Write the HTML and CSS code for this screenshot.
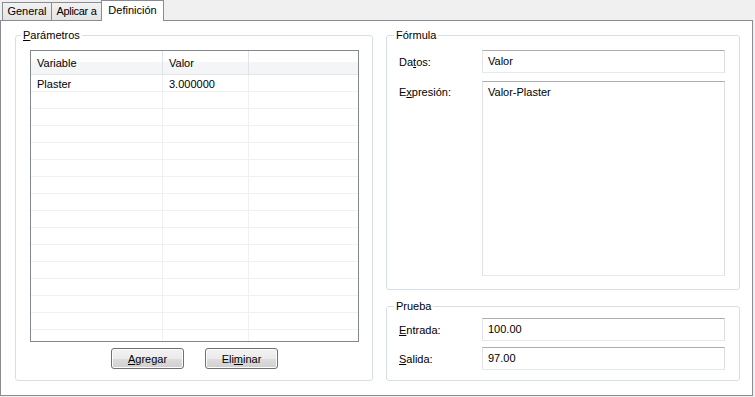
FILE: index.html
```html
<!DOCTYPE html>
<html lang="es">
<head>
  <meta charset="UTF-8" />
  <title>Definición</title>
  <link rel="stylesheet" href="styles.css">
</head>
<body>
  <div class="tabs">
    <div class="tab tab-general">General</div>
    <div class="tab tab-apply">Aplicar a</div>
    <div class="tab tab-def active">Definición</div>
  </div>

  <div class="panel">
    <fieldset class="group params">
      <legend><u>P</u>arámetros</legend>
      <div class="list">
        <div class="list-head">
          <div class="cell">Variable</div>
          <div class="cell">Valor</div>
          <div class="cell"></div>
        </div>
        <div class="list-body" id="rows">
          <div class="row">
            <div class="cell">Plaster</div>
            <div class="cell">3.000000</div>
            <div class="cell"></div>
          </div>
        </div>
      </div>
      <div class="buttons">
        <button class="btn"><u>A</u>gregar</button>
        <button class="btn">Eli<u>m</u>inar</button>
      </div>
    </fieldset>

    <div class="right">
      <fieldset class="group formula">
        <legend>Fórmula</legend>
        <div class="field">
          <label>Da<u>t</u>os:</label>
          <div class="input">Valor</div>
        </div>
        <div class="field top">
          <label>E<u>x</u>presión:</label>
          <div class="input area">Valor-Plaster</div>
        </div>
      </fieldset>

      <fieldset class="group test">
        <legend>Prueba</legend>
        <div class="field">
          <label><u>E</u>ntrada:</label>
          <div class="input">100.00</div>
        </div>
        <div class="field">
          <label><u>S</u>alida:</label>
          <div class="input">97.00</div>
        </div>
      </fieldset>
    </div>
  </div>

  <script>
    // empty grid rows below the data
    const rows = document.getElementById('rows');
    for (let i = 0; i < 16; i++) {
      const row = document.createElement('div');
      row.className = 'row';
      row.innerHTML = '<div class="cell"></div><div class="cell"></div><div class="cell"></div>';
      rows.appendChild(row);
    }
  </script>
</body>
</html>
```

FILE: styles.css
```css
* { margin: 0; padding: 0; box-sizing: border-box; }
body {
  font-family: "Liberation Sans", Arial, sans-serif;
  font-size: 11px;
  color: #000;
  background: #f0f0f0;
  width: 755px;
  height: 397px;
  overflow: hidden;
}
u { text-decoration: underline; text-underline-offset: 1px; }

.tabs {
  display: flex;
  align-items: flex-end;
  height: 20px;
  padding-left: 2px;
}
.tab {
  height: 18px;
  line-height: 16px;
  text-align: center;
  white-space: nowrap;
  border: 1px solid #898c95;
  border-bottom: none;
  background: linear-gradient(#f2f2f2, #e4e4e4);
  margin-right: -1px;
}
.tab-general { width: 50px; }
.tab-apply { width: 51px; letter-spacing: -0.3px; }
.tab-def { width: 63px; }
.tab.active {
  position: relative;
  z-index: 1;
  height: 21px;
  line-height: 18px;
  margin-bottom: -1px;
  background: #fff;
}

.panel {
  display: flex;
  gap: 13px;
  width: 753px;
  height: 376px;
  background: #fff;
  border: 1px solid #898c95;
  padding: 7px 12px 14px 14px;
}

.group {
  border: 1px solid #d5dfe5;
  border-radius: 3px;
  min-width: 0;
}
.group legend {
  line-height: 14px;
  padding: 0 2px;
}

.params {
  width: 358px;
  height: 353px;
  padding: 8px 13px 11px 14px;
  display: flex;
  flex-direction: column;
}
.params legend { margin-left: -9px; }

.list {
  height: 292px;
  border: 1px solid #828790;
  overflow: hidden;
}
.list-head, .row {
  display: grid;
  grid-template-columns: 132px 86px 1fr;
}
.list-head {
  height: 24px;
  background: linear-gradient(#fff 0, #fff 50%, #f4f5f7 50%, #f4f5f7 100%);
  border-bottom: 1px solid #e5e5e5;
}
.list-head .cell {
  line-height: 24px;
  padding-left: 6px;
  border-right: 1px solid #e0e3e8;
}
.row {
  height: 17px;
  border-bottom: 1px solid #f0f0f0;
}
.row .cell {
  line-height: 18px;
  padding-left: 6px;
  border-right: 1px solid #f0f0f0;
}
.list-head .cell:last-child, .row .cell:last-child { border-right: none; }

.buttons {
  display: flex;
  justify-content: center;
  gap: 21px;
  margin-top: 6px;
}
.btn {
  width: 73px;
  height: 21px;
  font-family: inherit;
  font-size: 11px;
  color: #000;
  border: 1px solid #707070;
  border-radius: 3px;
  background: linear-gradient(#f2f2f2 0, #ebebeb 50%, #dddddd 51%, #cfcfcf 100%);
  box-shadow: inset 0 0 0 1px #fcfcfc;
}

.right {
  width: 354px;
  display: flex;
  flex-direction: column;
  gap: 9px;
}
.formula {
  height: 262px;
  padding: 8px 14px 13px 12px;
  display: flex;
  flex-direction: column;
  gap: 8px;
}
.test {
  height: 82px;
  padding: 5px 14px 10px 12px;
  display: flex;
  flex-direction: column;
  gap: 6px;
}
.formula legend, .test legend { margin-left: -5px; }

.field {
  display: flex;
  align-items: center;
}
.field.top { align-items: flex-start; }
.field label {
  width: 83px;
  flex-shrink: 0;
}
.field.top label { padding-top: 5px; }
.input {
  width: 243px;
  height: 23px;
  line-height: 21px;
  padding-left: 5px;
  border: 1px solid;
  border-color: #abadb3 #dbdfe6 #e3e9ef #e2e3ea;
}
.input.area {
  height: 195px;
  line-height: 14px;
  padding-top: 3px;
}
```
